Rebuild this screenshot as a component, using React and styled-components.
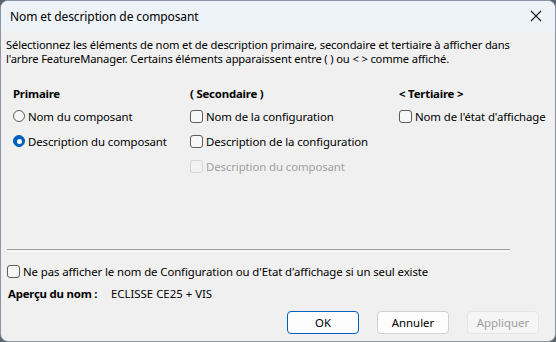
import React from 'react';
import styled, { createGlobalStyle } from 'styled-components';

const GlobalStyle = createGlobalStyle`
    html, body {
        margin: 0;
        padding: 0;
        background: #5a6470;
    }
    body {
        font-family: "Noto Sans", "Open Sans", sans-serif;
        font-size: 12px;
        color: #000;
    }
`;

const Window = styled.div`
    width: 556px;
    height: 342px;
    box-sizing: border-box;
    display: flex;
    flex-direction: column;
    background: #f0f0f0;
    border: 1px solid #8a96a4;
    border-radius: 8px;
    overflow: hidden;
`;

const TitleBar = styled.div`
    height: 30px;
    flex: none;
    display: flex;
    align-items: center;
    justify-content: space-between;
    padding: 0 10px 0 9px;
    background: #eef3f9;
    font-size: 12px;
    letter-spacing: -0.1px;
`;

const CloseGlyph = styled.svg`
    width: 12px;
    height: 12px;
    margin-right: 3px;
`;

const Body = styled.div`
    flex: 1;
    display: flex;
    flex-direction: column;
    padding: 7px 5px 7px 5px;
`;

const Intro = styled.p`
    margin: 0;
    line-height: 14px;
    font-size: 11.2px;
    letter-spacing: -0.15px;
`;

const Columns = styled.div`
    display: grid;
    grid-template-columns: 177px 209px 1fr;
    margin-top: 21px;
    padding-left: 7px;
    height: 94px;
`;

const Column = styled.div`
    display: flex;
    flex-direction: column;
    gap: 7px;
`;

const Heading = styled.div`
    font-weight: 700;
    font-size: 11.4px;
    height: 13px;
    line-height: 13px;
    letter-spacing: -0.2px;
`;

const Option = styled.label`
    display: flex;
    align-items: center;
    gap: 3px;
    height: 18px;
    font-size: 11.4px;
    letter-spacing: -0.1px;
    color: ${p => (p.disabled ? '#a0a0a0' : '#000')};
`;

const Radio = styled.span`
    width: 12px;
    height: 12px;
    border-radius: 50%;
    box-sizing: border-box;
    border: 1px solid ${p => (p.checked ? '#005fb8' : '#5d5d5d')};
    background: ${p => (p.checked ? '#005fb8' : '#f7f7f7')};
    display: flex;
    align-items: center;
    justify-content: center;
    flex: none;
    &::after {
        content: '';
        width: 5px;
        height: 5px;
        border-radius: 50%;
        background: #fff;
        display: ${p => (p.checked ? 'block' : 'none')};
    }
`;

const Box = styled.span`
    width: 13px;
    height: 13px;
    box-sizing: border-box;
    border-radius: 3px;
    border: 1px solid ${p => (p.disabled ? '#d4d4d4' : '#5d5d5d')};
    background: ${p => (p.disabled ? '#f2f2f2' : '#f7f7f7')};
    flex: none;
`;

const Spacer = styled.div`
    flex: 1;
`;

const Separator = styled.div`
    margin: 0 40px 0 1px;
    height: 1px;
    border-top: 1px solid #a0a0a0;
    border-bottom: 1px solid #fff;
`;

const Footer = styled.div`
    display: flex;
    flex-direction: column;
    padding: 10px 0 0 1px;
`;

const Preview = styled.div`
    display: flex;
    align-items: center;
    height: 16px;
    margin-top: 5px;
    padding-left: 1px;
    font-size: 11.4px;
`;

const PreviewLabel = styled.span`
    font-weight: 700;
    width: 103px;
    letter-spacing: -0.2px;
`;

const Buttons = styled.div`
    display: flex;
    justify-content: flex-end;
    gap: 18px;
    padding: 10px 11px 0 0;
`;

const Button = styled.button`
    width: 72px;
    height: 23px;
    box-sizing: border-box;
    border-radius: 4px;
    font-family: inherit;
    font-size: 11.4px;
    padding: 0;
    background: ${p => (p.disabled ? '#f5f5f5' : '#fdfdfd')};
    color: ${p => (p.disabled ? '#a0a0a0' : '#000')};
    border: 1px solid ${p => (p.primary ? '#005fb8' : p.disabled ? '#e5e5e5' : '#d0d0d0')};
`;

export default function App() {
    return (
        <>
            <GlobalStyle />
            <Window>
                <TitleBar>
                    <span>Nom et description de composant</span>
                    <CloseGlyph viewBox="0 0 12 12">
                        <path d="M1 1 L11 11 M11 1 L1 11" stroke="#1a1a1a" strokeWidth="1.1" fill="none" />
                    </CloseGlyph>
                </TitleBar>
                <Body>
                    <Intro>
                        Sélectionnez les éléments de nom et de description primaire, secondaire et tertiaire à afficher dans
                        <br />
                        l'arbre FeatureManager. Certains éléments apparaissent entre ( ) ou &lt; &gt; comme affiché.
                    </Intro>
                    <Columns>
                        <Column>
                            <Heading>Primaire</Heading>
                            <Option><Radio />Nom du composant</Option>
                            <Option><Radio checked />Description du composant</Option>
                        </Column>
                        <Column>
                            <Heading>( Secondaire )</Heading>
                            <Option><Box />Nom de la configuration</Option>
                            <Option><Box />Description de la configuration</Option>
                            <Option disabled><Box disabled />Description du composant</Option>
                        </Column>
                        <Column>
                            <Heading>&lt; Tertiaire &gt;</Heading>
                            <Option><Box />Nom de l'état d'affichage</Option>
                        </Column>
                    </Columns>
                    <Spacer />
                    <Separator />
                    <Footer>
                        <Option><Box />Ne pas afficher le nom de Configuration ou d'Etat d'affichage si un seul existe</Option>
                        <Preview>
                            <PreviewLabel>Aperçu du nom :</PreviewLabel>
                            <span>ECLISSE CE25 + VIS</span>
                        </Preview>
                        <Buttons>
                            <Button primary>OK</Button>
                            <Button>Annuler</Button>
                            <Button disabled>Appliquer</Button>
                        </Buttons>
                    </Footer>
                </Body>
            </Window>
        </>
    );
}
